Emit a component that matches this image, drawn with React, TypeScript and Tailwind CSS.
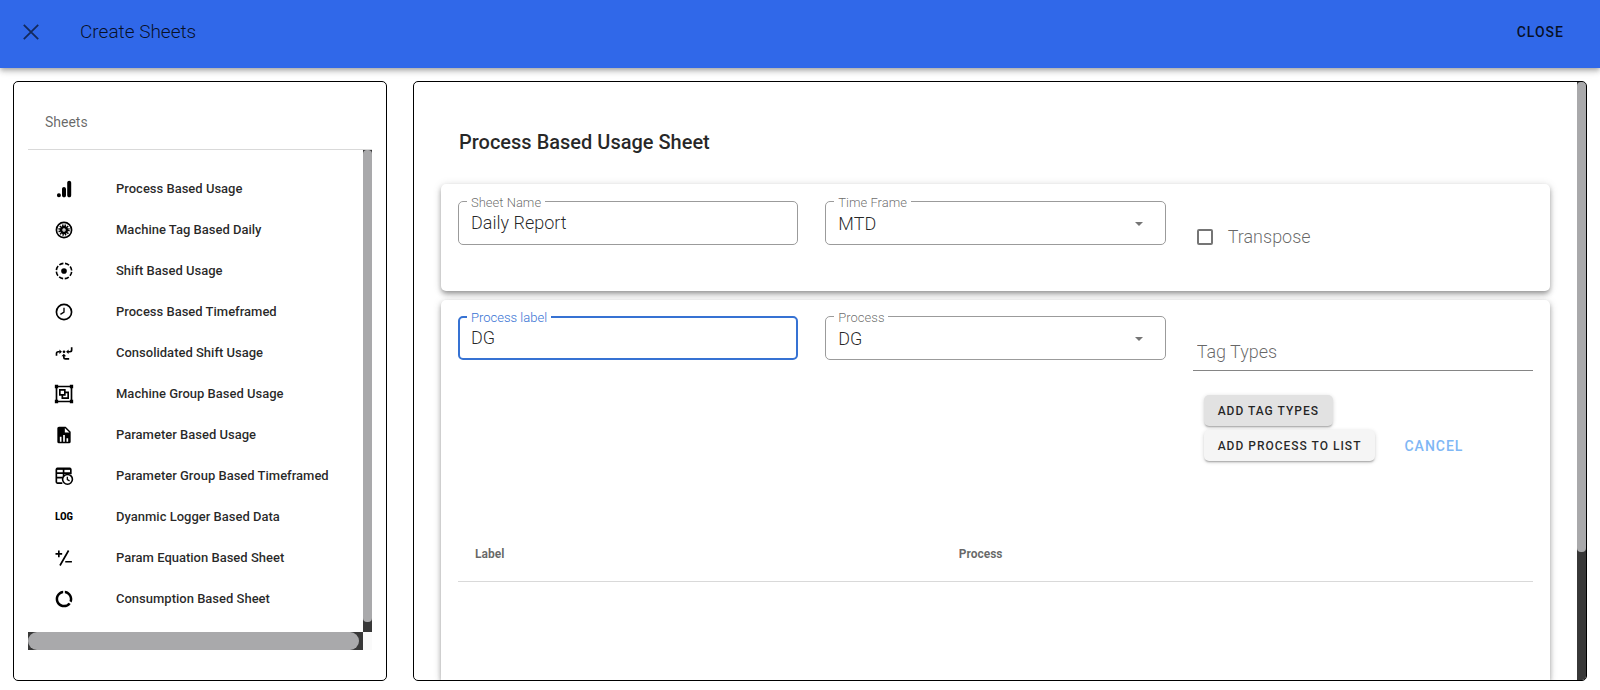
import type { ReactNode } from 'react';

const svg = (children: ReactNode) => (
  <svg viewBox="0 0 24 24" className="h-5 w-5 fill-black" aria-hidden="true">
    {children}
  </svg>
);

const icons: Record<string, ReactNode> = {
  analytics: svg(
    <path d="M15.86 4.39v15c0 1.67 1.14 2.61 2.39 2.61 1.14 0 2.39-.79 2.39-2.61V4.5c0-1.54-1.14-2.5-2.39-2.5s-2.39 1.06-2.39 2.39M9.61 12v7.39C9.61 21.07 10.77 22 12 22c1.14 0 2.39-.79 2.39-2.61v-7.28c0-1.54-1.14-2.5-2.39-2.5S9.61 10.67 9.61 12m-3.86 5.23a2.39 2.39 0 1 1 0 4.77 2.39 2.39 0 0 1 0-4.77" />,
  ),
  machine: svg(
    <>
      <circle cx="12" cy="12" r="9.1" fill="none" stroke="black" strokeWidth="2" />
      <circle cx="12" cy="12" r="3.5" fill="none" stroke="black" strokeWidth="3" />
      <circle cx="12" cy="12" r="5.8" fill="none" stroke="black" strokeWidth="2.2" strokeDasharray="1.7 1.337" />
      <circle cx="12" cy="12" r="0.7" />
    </>,
  ),
  shift: svg(
    <>
      <circle cx="12" cy="12" r="9.2" fill="none" stroke="black" strokeWidth="1.9" strokeDasharray="5.2 2.026" strokeDashoffset="-1" />
      <circle cx="12" cy="12" r="3.4" />
    </>,
  ),
  clock: svg(
    <>
      <circle cx="12" cy="12" r="9.1" fill="none" stroke="black" strokeWidth="2" />
      <path d="M12 7v5.2l-4.3 2.6" fill="none" stroke="black" strokeWidth="1.6" />
    </>,
  ),
  consolidated: svg(
    <>
      <path d="M3 15.2v-2.700c0-1.300.7-2 2-2h2M21.200 5v3.500c0 1.300-.7 2-2 2h-2.400M11.800 15v2c0 1.300.7 2 2 2h4.400" fill="none" stroke="black" strokeWidth="2" />
      <path d="M6.500 7.900l3 2.600-3 2.600zM17.500 7.900l-3 2.600 3 2.600zM9 16l2.800-3.200 2.800 3.200z" />
      <circle cx="12" cy="10.500" r="1.600" />
    </>,
  ),
  group: svg(
    <path d="M1 1v4h1v14H1v4h4v-1h14v1h4v-4h-1V5h1V1h-4v1H5V1M5 4h14v1h1v14h-1v1H5v-1H4V5h1M6 6v8h3v4h9V9h-4V6M8 8h4v4H8m6-1h2v5h-5v-2h3" />,
  ),
  file: svg(
    <path d="M13 9h5.500L13 3.500zM6 2h8l6 6v12a2 2 0 0 1-2 2H6a2 2 0 0 1-2-2V4c0-1.110.89-2 2-2m1 18h2v-6H7zm4 0h2v-8h-2zm4 0h2v-4h-2z" />,
  ),
  tableClock: svg(
    <>
      <path d="M10 20.500H4a1.200 1.200 0 0 1-1.200-1.200V4.200A1.200 1.200 0 0 1 4 3h15a1.200 1.200 0 0 1 1.200 1.200V10M3 8.500h17M3 14h7.500M11.500 3v9" fill="none" stroke="black" strokeWidth="2" />
      <rect x="3" y="2" width="17" height="2.600" />
      <circle cx="16.200" cy="16" r="5.900" fill="white" stroke="black" strokeWidth="1.900" />
      <path d="M16 12.800v3.600l2.700 1.500" fill="none" stroke="black" strokeWidth="1.500" />
    </>,
  ),
  log: (
    <span className="font-['Liberation_Sans_Narrow','Roboto_Condensed',Roboto,sans-serif] text-[11px] font-bold leading-5 text-black">
      LOG
    </span>
  ),
  equation: svg(
    <path d="M17.500 3L7.200 21M5.800 3v8M1.800 7h8M13.500 16.500h8" fill="none" stroke="black" strokeWidth="2" />,
  ),
  usage: svg(
    <path d="M13 2.050v3.030c3.390.49 6 3.390 6 6.920 0 .9-.18 1.750-.48 2.540l2.600 1.530c.56-1.240.88-2.620.88-4.070 0-5.180-3.950-9.450-9-9.950M12 19c-3.870 0-7-3.130-7-7 0-3.530 2.610-6.430 6-6.920V2.050c-5.060.5-9 4.760-9 9.950 0 5.520 4.470 10 9.990 10 3.310 0 6.240-1.610 8.060-4.090l-2.600-1.530A6.980 6.980 0 0 1 12 19" />,
  ),
};

const sheets = [
  { icon: 'analytics', label: 'Process Based Usage' },
  { icon: 'machine', label: 'Machine Tag Based Daily' },
  { icon: 'shift', label: 'Shift Based Usage' },
  { icon: 'clock', label: 'Process Based Timeframed' },
  { icon: 'consolidated', label: 'Consolidated Shift Usage' },
  { icon: 'group', label: 'Machine Group Based Usage' },
  { icon: 'file', label: 'Parameter Based Usage' },
  { icon: 'tableClock', label: 'Parameter Group Based Timeframed' },
  { icon: 'log', label: 'Dyanmic Logger Based Data' },
  { icon: 'equation', label: 'Param Equation Based Sheet' },
  { icon: 'usage', label: 'Consumption Based Sheet' },
];

const cardShadow =
  'shadow-[0_3px_5px_-1px_rgba(0,0,0,0.3),0_3px_6px_0_rgba(0,0,0,0.14),0_1px_10px_0_rgba(0,0,0,0.12)]';

function TextField({ id, label, value, active = false }: { id: string; label: string; value: string; active?: boolean }) {
  return (
    <div className="relative">
      <input
        id={id}
        defaultValue={value}
        className={`block h-11 w-full rounded-[5px] bg-white text-lg font-light text-black/85 outline-none ${
          active ? 'border-2 border-[#3672d3] px-[11px] pb-[2px]' : 'border border-[#9b9b9b] px-3 pb-[2px]'
        }`}
      />
      <label
        htmlFor={id}
        className={`absolute -top-2 left-[9px] bg-white px-1 text-[13px] font-light leading-5 ${
          active ? 'text-[#3672d3]' : 'text-black/60'
        }`}
      >
        {label}
      </label>
    </div>
  );
}

function SelectField({ id, label, value }: { id: string; label: string; value: string }) {
  return (
    <div className="relative">
      <select
        id={id}
        defaultValue={value}
        className="block h-11 w-full appearance-none rounded-[5px] border border-[#9b9b9b] bg-white px-3 pt-[2px] text-lg font-light text-black/85 outline-none"
      >
        <option>{value}</option>
      </select>
      <label htmlFor={id} className="absolute -top-2 left-[9px] bg-white px-1 text-[13px] font-light leading-5 text-black/60">
        {label}
      </label>
      <svg viewBox="0 0 10 5" className="pointer-events-none absolute right-[23px] top-[21px] h-1 w-2 fill-[#757575]" aria-hidden="true">
        <path d="M0 0h10L5 5z" />
      </svg>
    </div>
  );
}

export default function App() {
  return (
    <div className="flex h-screen flex-col overflow-hidden bg-white font-[Roboto,sans-serif] text-black/85">
      <header className="relative z-10 flex h-[68px] shrink-0 items-center bg-[#3068e9] pb-1 pl-[21px] pr-9 shadow-[0_2px_4px_-1px_rgba(0,0,0,0.2),0_4px_5px_0_rgba(0,0,0,0.14),0_1px_10px_0_rgba(0,0,0,0.12)]">
        <button type="button" aria-label="Close dialog" className="flex h-5 w-5 items-center justify-center">
          <svg viewBox="0 0 16 16" className="h-4 w-4 stroke-black/60" fill="none" strokeWidth="1.800" aria-hidden="true">
            <path d="M.8.8l14.400 14.400M15.200.8L.8 15.200" />
          </svg>
        </button>
        <h1 className="ml-[39px] text-[19px] font-light text-black/85">Create Sheets</h1>
        <button type="button" className="ml-auto text-sm font-medium tracking-[1px] text-black/85">
          CLOSE
        </button>
      </header>

      <main className="grid min-h-0 flex-1 grid-cols-4 pb-[9px]">
        <aside className="col-span-1 flex min-h-0 min-w-0 px-[13px] pt-[13px]">
          <div className="flex min-w-0 flex-1 flex-col rounded-[5px] border border-black px-[14px] pb-[30px]">
            <h2 className="flex h-[68px] items-center border-b border-black/15 px-[17px] pt-3 text-sm font-normal text-black/60">
              Sheets
            </h2>
            <div className="flex min-h-0 flex-1">
              <nav className="min-w-0 flex-1 overflow-hidden pt-[18px]">
                <ul>
                  {sheets.map((sheet) => (
                    <li key={sheet.label}>
                      <a href="#" className="flex h-[41px] items-center pl-[26px]">
                        <span className="flex w-5 justify-center">{icons[sheet.icon]}</span>
                        <span className="ml-[42px] whitespace-nowrap text-[13px] font-medium text-black/85">{sheet.label}</span>
                      </a>
                    </li>
                  ))}
                </ul>
              </nav>
              <div className="w-[9px] bg-[#383838] pb-[10px]">
                <div className="h-full rounded-[4px] bg-[#a9a9ab]" />
              </div>
            </div>
            <div className="flex h-[18px]">
              <div className="flex-1 bg-[#383838] pr-1">
                <div className="h-full rounded-full bg-[#a9a9ab]" />
              </div>
              <div className="w-[9px] bg-[#fafafa]" />
            </div>
          </div>
        </aside>

        <section className="col-span-3 flex min-h-0 min-w-0 px-[13px] pt-[13px]">
          <div className="flex min-w-0 flex-1 overflow-hidden rounded-[5px] border border-black">
            <div className="flex min-w-0 flex-1 flex-col px-[27px]">
              <h2 className="flex h-[102px] shrink-0 items-center px-[18px] pt-[18px] text-xl font-medium">Process Based Usage Sheet</h2>

              <div className={`grid h-[107px] shrink-0 grid-cols-3 gap-[27px] rounded-[5px] bg-white px-[17px] pt-[17px] ${cardShadow}`}>
                <TextField id="sheet-name" label="Sheet Name" value="Daily Report" />
                <SelectField id="time-frame" label="Time Frame" value="MTD" />
                <div className="flex h-[71px] items-center pl-1">
                  <input
                    id="transpose"
                    type="checkbox"
                    className="h-4 w-4 appearance-none rounded-[2px] border-2 border-[#757575] bg-white"
                  />
                  <label htmlFor="transpose" className="ml-[15px] text-lg font-light text-black/60">
                    Transpose
                  </label>
                </div>
              </div>

              <div className={`mt-[9px] flex min-h-0 flex-1 flex-col rounded-t-[5px] bg-white px-[17px] pt-4 ${cardShadow}`}>
                <div className="grid h-[212px] shrink-0 grid-cols-3 gap-[27px]">
                  <TextField id="process-label" label="Process label" value="DG" active />
                  <SelectField id="process" label="Process" value="DG" />
                  <div>
                    <input
                      aria-label="Tag Types"
                      placeholder="Tag Types"
                      className="mt-[18px] block h-[37px] w-full border-b border-[#858585] bg-transparent px-1 pb-[2px] text-lg font-light outline-none placeholder:text-black/60"
                    />
                    <div className="flex flex-col items-start gap-1 pl-[11px] pt-6">
                      <button type="button" className="h-[31px] rounded-[5px] bg-[#e2e2e2] px-[14px] text-xs font-medium tracking-[1px] shadow-[0_2px_2px_-1px_rgba(0,0,0,0.3),0_1px_4px_0_rgba(0,0,0,0.16)]">
                        ADD TAG TYPES
                      </button>
                      <div className="flex items-center">
                        <button type="button" className="h-[31px] rounded-[5px] bg-[#f5f5f5] px-[14px] text-xs font-medium tracking-[1px] shadow-[0_2px_2px_-1px_rgba(0,0,0,0.3),0_1px_4px_0_rgba(0,0,0,0.16)]">
                          ADD PROCESS TO LIST
                        </button>
                        <button type="button" className="ml-[29px] text-sm font-medium tracking-[1px] text-[#7fb7f5]">
                          CANCEL
                        </button>
                      </div>
                    </div>
                  </div>
                </div>
                <table className="w-full table-fixed">
                  <thead>
                    <tr className="h-[53px] border-b border-black/15 text-left text-xs text-black/60">
                      <th className="w-[45%] px-[17px] font-bold">Label</th>
                      <th className="w-[45%] px-[17px] font-bold">Process</th>
                      <th aria-label="Actions" />
                    </tr>
                  </thead>
                </table>
              </div>
            </div>
            <div className="w-[9px] bg-[#383838] pb-[128px]">
              <div className="h-full rounded-[4px] bg-[#a9a9ab]" />
            </div>
          </div>
        </section>
      </main>
    </div>
  );
}
